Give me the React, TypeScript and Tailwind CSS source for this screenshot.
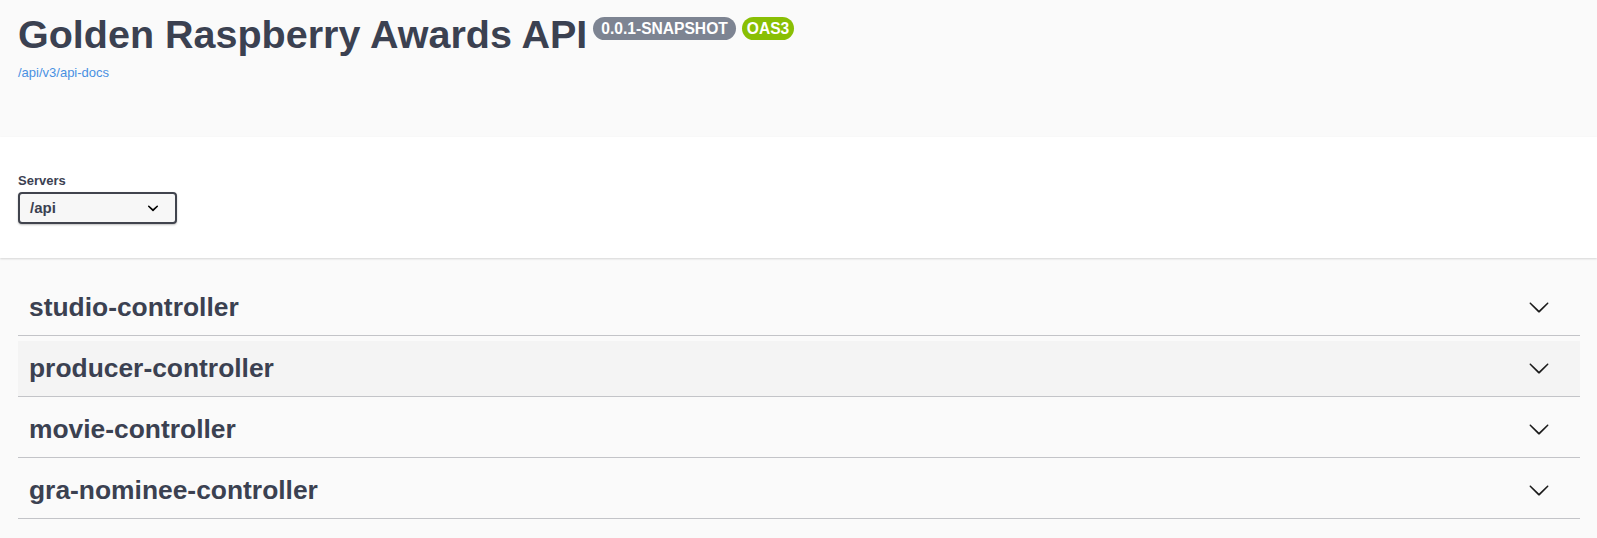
import React from "react";

const tags = ["studio-controller", "producer-controller", "movie-controller", "gra-nominee-controller"];

function ArrowDown({ className }: { className?: string }) {
  return (
    <svg viewBox="0 0 20 20" className={className} fill="currentColor" aria-hidden="true">
      <path d="M17.418 6.109c.272-.268.709-.268.979 0s.271.701 0 .969l-7.908 7.83c-.27.268-.707.268-.979 0l-7.908-7.83c-.27-.268-.27-.701 0-.969.271-.268.709-.268.979 0L10 13.25l7.418-7.141z" />
    </svg>
  );
}

function SelectArrow({ className }: { className?: string }) {
  return (
    <svg viewBox="0 0 20 20" className={className} fill="currentColor" aria-hidden="true">
      <path d="M13.418 7.859a.695.695 0 0 1 .978 0 .68.68 0 0 1 0 .969l-3.908 3.83a.697.697 0 0 1-.979 0l-3.908-3.83a.68.68 0 0 1 0-.969.695.695 0 0 1 .978 0L10 11l3.418-3.141z" />
    </svg>
  );
}

export default function App() {
  return (
    <div className="min-h-[538px] bg-[#fafafa] text-[#3b4151] font-['Liberation_Sans',Arial,sans-serif]">
      {/* info header */}
      <div className="px-[18px] pt-[11px] pb-[57px]">
        <div className="flex items-start">
          <h2 className="text-[39.5px] leading-[46px] font-bold m-0">Golden Raspberry Awards API</h2>
          <span className="ml-[6px] mt-[6px] h-[23px] flex items-center rounded-full bg-[#7d8492] px-[8px] text-[15.6px] font-bold text-white">
            0.0.1-SNAPSHOT
          </span>
          <span className="ml-[6px] mt-[6px] h-[23px] flex items-center rounded-full bg-[#89bf04] px-[5px] text-[15.6px] font-bold text-white">
            OAS3
          </span>
        </div>
        <a className="block mt-[8px] text-[13px] leading-[15px] text-[#4990e2]">/api/v3/api-docs</a>
      </div>

      {/* servers */}
      <div className="bg-white shadow-[0_1px_2px_0_rgba(0,0,0,0.15)] px-[18px] pt-[36px] pb-[34px]">
        <div className="text-[13px] leading-[15px] font-bold mb-[4px]">Servers</div>
        <div className="relative w-[159px] h-[32px] border-2 border-[#41444e] rounded-[4px] bg-[#f7f7f7] shadow-[0_1px_2px_0_rgba(0,0,0,0.25)] flex items-center pl-[10px]">
          <span className="text-[15px] font-bold text-[#3b4151]">/api</span>
          <SelectArrow className="absolute right-[11px] top-1/2 -translate-y-1/2 w-[22px] h-[22px] text-black" />
        </div>
      </div>

      {/* tags */}
      <div className="pl-[18px] pr-[17px] pt-[22px] pb-[15px]">
        {tags.map((t, i) => (
          <div
            key={t}
            className={
              "flex items-center justify-between h-[56px] mb-[5px] border-b border-[#c3c4c8] pl-[11px] pr-[30px] " +
              (i === 1 ? "bg-[#f4f4f4]" : "")
            }
          >
            <span className="text-[26.4px] font-bold leading-none">{t}</span>
            <ArrowDown className="w-[22px] h-[22px] text-[#1b1b1b] -mt-[2px]" />
          </div>
        ))}
      </div>
    </div>
  );
}
